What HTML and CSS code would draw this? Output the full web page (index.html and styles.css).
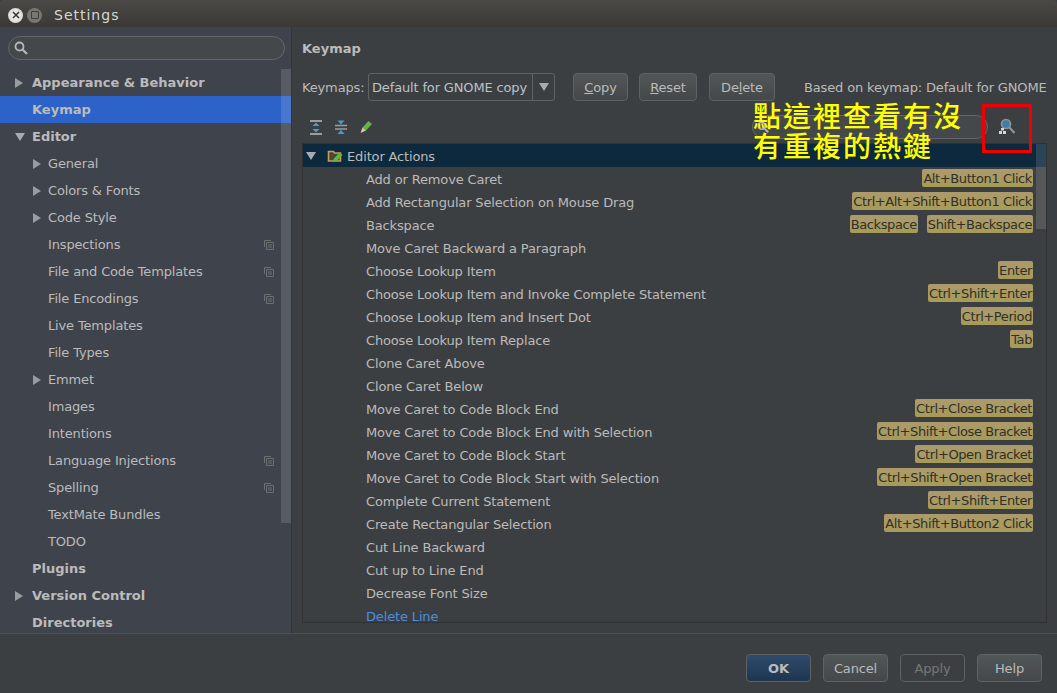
FILE: index.html
```html
<!DOCTYPE html>
<html lang="en">
<head>
    <meta charset="UTF-8">
    <meta name="viewport" content="width=device-width, initial-scale=1.0">
    <title>Settings</title>
    <link rel="stylesheet" href="styles.css">
</head>
<body>
    <div class="window">
        <header class="titlebar">
            <span class="win-btn win-close">
                <svg width="10" height="10" viewBox="0 0 10 10"><path d="M2 2l6 6M8 2l-6 6" stroke="#333" stroke-width="1.5"/></svg>
            </span>
            <span class="win-btn win-max"><i></i></span>
            <span class="win-title">Settings</span>
        </header>

        <div class="main">
            <aside class="sidebar">
                <div class="side-search">
                    <svg width="16" height="16" viewBox="0 0 16 16"><circle cx="6.500" cy="6.500" r="4" fill="none" stroke="#b4b8ba" stroke-width="1.800"/><path d="M9.500 9.500l4.500 4.500" stroke="#b4b8ba" stroke-width="2.200"/></svg>
                </div>
                <div class="side-tree">
                    <ul>
                        <li class="item top"><b class="arrow right"></b>Appearance &amp; Behavior</li>
                        <li class="item top selected"><b class="arrow"></b>Keymap</li>
                        <li class="item top"><b class="arrow down"></b>Editor</li>
                        <li class="item sub"><b class="arrow right"></b>General</li>
                        <li class="item sub"><b class="arrow right"></b>Colors &amp; Fonts</li>
                        <li class="item sub"><b class="arrow right"></b>Code Style</li>
                        <li class="item sub"><b class="arrow"></b>Inspections<svg class="copy-icon" viewBox="0 0 10 10"><path d="M.5 7V.5H7M2.500 2.500h7v7h-7zM4 5h4M4 7h4" fill="none" stroke="#6b6f72"/></svg></li>
                        <li class="item sub"><b class="arrow"></b>File and Code Templates<svg class="copy-icon" viewBox="0 0 10 10"><path d="M.5 7V.5H7M2.500 2.500h7v7h-7zM4 5h4M4 7h4" fill="none" stroke="#6b6f72"/></svg></li>
                        <li class="item sub"><b class="arrow"></b>File Encodings<svg class="copy-icon" viewBox="0 0 10 10"><path d="M.5 7V.5H7M2.500 2.500h7v7h-7zM4 5h4M4 7h4" fill="none" stroke="#6b6f72"/></svg></li>
                        <li class="item sub"><b class="arrow"></b>Live Templates</li>
                        <li class="item sub"><b class="arrow"></b>File Types</li>
                        <li class="item sub"><b class="arrow right"></b>Emmet</li>
                        <li class="item sub"><b class="arrow"></b>Images</li>
                        <li class="item sub"><b class="arrow"></b>Intentions</li>
                        <li class="item sub"><b class="arrow"></b>Language Injections<svg class="copy-icon" viewBox="0 0 10 10"><path d="M.5 7V.5H7M2.500 2.500h7v7h-7zM4 5h4M4 7h4" fill="none" stroke="#6b6f72"/></svg></li>
                        <li class="item sub"><b class="arrow"></b>Spelling<svg class="copy-icon" viewBox="0 0 10 10"><path d="M.5 7V.5H7M2.500 2.500h7v7h-7zM4 5h4M4 7h4" fill="none" stroke="#6b6f72"/></svg></li>
                        <li class="item sub"><b class="arrow"></b>TextMate Bundles</li>
                        <li class="item sub"><b class="arrow"></b>TODO</li>
                        <li class="item top"><b class="arrow"></b>Plugins</li>
                        <li class="item top"><b class="arrow right"></b>Version Control</li>
                        <li class="item top"><b class="arrow"></b>Directories</li>
                    </ul>
                    <div class="side-scroll"></div>
                </div>
            </aside>

            <section class="content">
                <h2 class="heading">Keymap</h2>

                <div class="keymap-bar">
                    <span class="keymap-label">Keymaps:</span>
                    <div class="select">
                        <span class="select-value">Default for GNOME copy</span>
                        <span class="select-arrow"><b class="arrow down"></b></span>
                    </div>
                    <button class="btn btn-copy"><u>C</u>opy</button>
                    <button class="btn btn-reset"><u>R</u>eset</button>
                    <button class="btn btn-delete">De<u>l</u>ete</button>
                    <span class="based-on">Based on keymap: Default for GNOME</span>
                </div>

                <div class="tools">
                    <svg class="tool" width="16" height="16" viewBox="0 0 16 16"><path d="M2 2h12M2 15h12" stroke="#9a9ea0" stroke-width="1.800"/><path d="M8 3.500l3.500 3.500h-7zM8 13.500l3.500-3.500h-7z" fill="#4a9ad0"/></svg>
                    <svg class="tool" width="16" height="16" viewBox="0 0 16 16"><path d="M2 6.500h12M2 10h12" stroke="#9a9ea0" stroke-width="1.600"/><path d="M8 5.500L4.500 1.500h7zM8 11l3.500 4h-7z" fill="#4a9ad0"/></svg>
                    <svg class="tool" width="16" height="16" viewBox="0 0 16 16"><path d="M4.500 8.500L10.500 2 14 5l-6 6.500z" fill="#62b543"/><path d="M4.500 8.500L8 11.500 2.500 14z" fill="#e0c9a0"/></svg>
                    <div class="filter">
                        <svg width="14" height="14" viewBox="0 0 16 16"><circle cx="6.500" cy="6.500" r="4" fill="none" stroke="#b4b8ba" stroke-width="1.800"/><path d="M9.500 9.500l4.500 4.500" stroke="#b4b8ba" stroke-width="2.200"/></svg>
                    </div>
                    <svg class="tool-find" width="18" height="18" viewBox="0 0 18 18"><circle cx="8" cy="6" r="4.500" fill="#3d7ea8" stroke="#8f9294" stroke-width="1.700"/><path d="M11.500 9.500l5 5.500" stroke="#8f9294" stroke-width="2.200"/><path d="M3 10h3v2.500H3zM1 13h3v3H1zM5 13h3v3H5z" fill="#d4d6d8"/></svg>
                </div>

                <div class="tree">
                    <div class="tree-head"><b class="arrow down"></b>
                        <svg width="17" height="16" viewBox="0 0 17 16"><path d="M1.500 3.500h5l1 1.500h6v8h-12z" fill="#4c4636" stroke="#c69c5d" stroke-width="1.600"/><path d="M6.500 11l6-6.500 3 2.500-6 6.500H6.500z" fill="#62b543"/></svg>
                        <span>Editor Actions</span>
                    </div>
                    <div class="tree-row"><span>Add or Remove Caret</span><kbd>Alt+Button1 Click</kbd></div>
                    <div class="tree-row"><span>Add Rectangular Selection on Mouse Drag</span><kbd>Ctrl+Alt+Shift+Button1 Click</kbd></div>
                    <div class="tree-row"><span>Backspace</span><kbd>Backspace</kbd><kbd>Shift+Backspace</kbd></div>
                    <div class="tree-row"><span>Move Caret Backward a Paragraph</span></div>
                    <div class="tree-row"><span>Choose Lookup Item</span><kbd>Enter</kbd></div>
                    <div class="tree-row"><span>Choose Lookup Item and Invoke Complete Statement</span><kbd>Ctrl+Shift+Enter</kbd></div>
                    <div class="tree-row"><span>Choose Lookup Item and Insert Dot</span><kbd>Ctrl+Period</kbd></div>
                    <div class="tree-row"><span>Choose Lookup Item Replace</span><kbd>Tab</kbd></div>
                    <div class="tree-row"><span>Clone Caret Above</span></div>
                    <div class="tree-row"><span>Clone Caret Below</span></div>
                    <div class="tree-row"><span>Move Caret to Code Block End</span><kbd>Ctrl+Close Bracket</kbd></div>
                    <div class="tree-row"><span>Move Caret to Code Block End with Selection</span><kbd>Ctrl+Shift+Close Bracket</kbd></div>
                    <div class="tree-row"><span>Move Caret to Code Block Start</span><kbd>Ctrl+Open Bracket</kbd></div>
                    <div class="tree-row"><span>Move Caret to Code Block Start with Selection</span><kbd>Ctrl+Shift+Open Bracket</kbd></div>
                    <div class="tree-row"><span>Complete Current Statement</span><kbd>Ctrl+Shift+Enter</kbd></div>
                    <div class="tree-row"><span>Create Rectangular Selection</span><kbd>Alt+Shift+Button2 Click</kbd></div>
                    <div class="tree-row"><span>Cut Line Backward</span></div>
                    <div class="tree-row"><span>Cut up to Line End</span></div>
                    <div class="tree-row"><span>Decrease Font Size</span></div>
                    <div class="tree-row link"><span>Delete Line</span></div>
                    <div class="tree-scroll"></div>
                </div>
            </section>
        </div>

        <footer class="footer">
            <button class="btn btn-foot btn-ok">OK</button>
            <button class="btn btn-foot">Cancel</button>
            <button class="btn btn-foot btn-off">Apply</button>
            <button class="btn btn-foot">Help</button>
        </footer>

        <!-- annotation drawn over the screenshot -->
        <div class="note">點這裡查看有沒<br>有重複的熱鍵</div>
        <div class="note-box"></div>
    </div>
</body>
</html>
```

FILE: styles.css
```css
body {
    margin: 0;
    background-color: #3c3f41;
    color: #bbbbbb;
    font-family: "DejaVu Sans", sans-serif;
    font-size: 13px;
    letter-spacing: -0.15px;
}

ul {
    list-style-type: none;
    margin: 0;
    padding: 0;
}

.window {
    position: relative;
    width: 1057px;
    height: 693px;
    display: flex;
    flex-direction: column;
    overflow: hidden;
}

/* title bar */
.titlebar {
    height: 27px;
    display: flex;
    align-items: center;
    padding: 3px 0 0 8px;
    background: linear-gradient(#4a4945, #3a3936);
    border-top-left-radius: 4px;
    border-top-right-radius: 4px;
    box-sizing: border-box;
}

.win-btn {
    width: 15px;
    height: 15px;
    border-radius: 50%;
    display: flex;
    align-items: center;
    justify-content: center;
    margin-right: 4px;
}

.win-close {
    background: radial-gradient(#f4f4f2, #cfcfcb);
}

.win-max {
    background: #77766f;
}

.win-max i {
    width: 6px;
    height: 6px;
    border: 1px solid #3f3e3a;
    border-radius: 1px;
}

.win-title {
    margin-left: 8px;
    color: #d8d6cf;
    font-size: 14px;
    letter-spacing: 1px;
}

.main {
    flex: 1;
    display: flex;
    min-height: 0;
    border-bottom: 1px solid #515151;
}

/* left settings tree */
.sidebar {
    width: 292px;
    box-sizing: border-box;
    flex-shrink: 0;
    background-color: #3f434c;
    border-right: 1px solid #333537;
    display: flex;
    flex-direction: column;
}

.side-search {
    height: 24px;
    box-sizing: border-box;
    margin: 9px 6px 9px 8px;
    border: 1px solid #63676a;
    border-radius: 12px;
    background-color: #45484b;
    display: flex;
    align-items: center;
    padding-left: 4px;
}

.side-tree {
    position: relative;
    flex: 1;
    overflow: hidden;
}

.item {
    height: 27px;
    display: flex;
    align-items: center;
}

.item.top {
    padding-left: 14px;
    font-weight: bold;
    letter-spacing: 0;
}

.item.top .arrow {
    width: 18px;
}

.item.sub {
    padding-left: 32px;
}

.item.sub .arrow {
    width: 16px;
}

.item.selected {
    background-color: #2d63c8;
}

.copy-icon {
    width: 10px;
    height: 10px;
    margin-left: auto;
    margin-right: 17px;
}

.side-scroll {
    position: absolute;
    top: 0;
    bottom: 110px;
    right: 0;
    width: 10px;
    background-color: rgba(255, 255, 255, 0.13);
}

/* triangles */
.arrow {
    flex-shrink: 0;
    display: inline-block;
    position: relative;
    height: 12px;
}

.arrow.right::before,
.arrow.down::before {
    content: "";
    position: absolute;
    left: 1px;
    top: 1px;
    width: 0;
    height: 0;
}

.arrow.right::before {
    border-left: 8px solid #9a9d9f;
    border-top: 5px solid transparent;
    border-bottom: 5px solid transparent;
}

.arrow.down::before {
    top: 2px;
    border-top: 8px solid #a9acae;
    border-left: 5px solid transparent;
    border-right: 5px solid transparent;
}

/* keymap panel */
.content {
    flex: 1;
    min-width: 0;
    padding: 0 10px 10px 10px;
    display: flex;
    flex-direction: column;
}

.heading {
    margin: 13px 0 0 0;
    height: 18px;
    line-height: 18px;
    font-size: 13px;
    font-weight: bold;
    letter-spacing: 0;
}

.keymap-bar {
    display: flex;
    align-items: center;
    height: 28px;
    margin-top: 15px;
    white-space: nowrap;
}

.keymap-label {
    width: 66px;
    flex-shrink: 0;
}

.select {
    width: 187px;
    height: 28px;
    flex-shrink: 0;
    box-sizing: border-box;
    border: 1px solid #5e6265;
    border-radius: 3px;
    display: flex;
    align-items: center;
    margin-right: 18px;
}

.select-value {
    flex: 1;
    padding-left: 3px;
    color: #b9c2c9;
}

.select-arrow {
    width: 21px;
    height: 100%;
    border-left: 1px solid #5e6265;
    display: flex;
    align-items: center;
    justify-content: center;
}

.select-arrow .arrow {
    width: 12px;
}

.btn {
    height: 28px;
    flex-shrink: 0;
    padding: 0;
    box-sizing: border-box;
    border: 1px solid #5e6265;
    border-radius: 4px;
    background: linear-gradient(#515657, #45484a);
    color: #bbbbbb;
    font-family: inherit;
    font-size: 13px;
    letter-spacing: -0.15px;
}

.btn-copy {
    width: 55px;
    margin-right: 11px;
}

.btn-reset {
    width: 58px;
    margin-right: 12px;
}

.btn-delete {
    width: 66px;
    margin-right: 29px;
}

.tools {
    height: 24px;
    margin-top: 14px;
    display: flex;
    align-items: center;
    padding-left: 6px;
    gap: 9px;
}

.filter {
    width: 236px;
    height: 24px;
    box-sizing: border-box;
    margin-left: 369px;
    padding-left: 3px;
    border: 1px solid #63676a;
    border-radius: 12px;
    background-color: #45484b;
    display: flex;
    align-items: center;
}

.tool-find {
    margin-left: 1px;
}

.tree {
    position: relative;
    flex: 1;
    min-height: 0;
    margin-top: 4px;
    border: 1px solid #2f3133;
    overflow: hidden;
}

.tree-head {
    height: 23px;
    box-sizing: border-box;
    padding: 1px 0 0 2px;
    background-color: #0d293e;
    display: flex;
    align-items: center;
}

.tree-head .arrow {
    width: 22px;
}

.tree-head span {
    margin-left: 3px;
}

.tree-row {
    height: 23px;
    box-sizing: border-box;
    display: flex;
    align-items: center;
    padding: 1px 13px 0 63px;
    white-space: nowrap;
}

.tree-row span {
    margin-right: auto;
}

.tree-row.link {
    color: #4a8ee0;
}

kbd {
    height: 18px;
    line-height: 19px;
    margin: 0 0 2px 9px;
    padding: 0 1px;
    border-radius: 2px;
    background: linear-gradient(#ad9a6c, #a69b57);
    color: #2f2f2c;
    font-family: inherit;
    font-size: 13px;
    letter-spacing: -0.4px;
}

.tree-scroll {
    position: absolute;
    top: 0;
    right: 0;
    width: 10px;
    height: 85px;
    background-color: rgba(255, 255, 255, 0.13);
}

/* bottom buttons */
.footer {
    height: 59px;
    box-sizing: border-box;
    display: flex;
    align-items: center;
    justify-content: flex-end;
    gap: 12px;
    padding: 9px 15px 0 0;
}

.btn-foot {
    width: 65px;
}

.btn-ok {
    background: linear-gradient(#2f4b6c, #1f3550);
    font-weight: bold;
    letter-spacing: 0;
}

.btn-off {
    background: none;
    color: #777777;
}

/* annotation */
.note {
    position: absolute;
    left: 753px;
    top: 100px;
    color: #ffff00;
    font-family: "Noto Sans CJK TC", sans-serif;
    font-size: 28px;
    font-weight: 500;
    line-height: 30px;
    letter-spacing: 2px;
    white-space: nowrap;
}

.note-box {
    position: absolute;
    left: 982px;
    top: 104px;
    width: 44px;
    height: 43px;
    border: 3px solid #f00000;
}
```
